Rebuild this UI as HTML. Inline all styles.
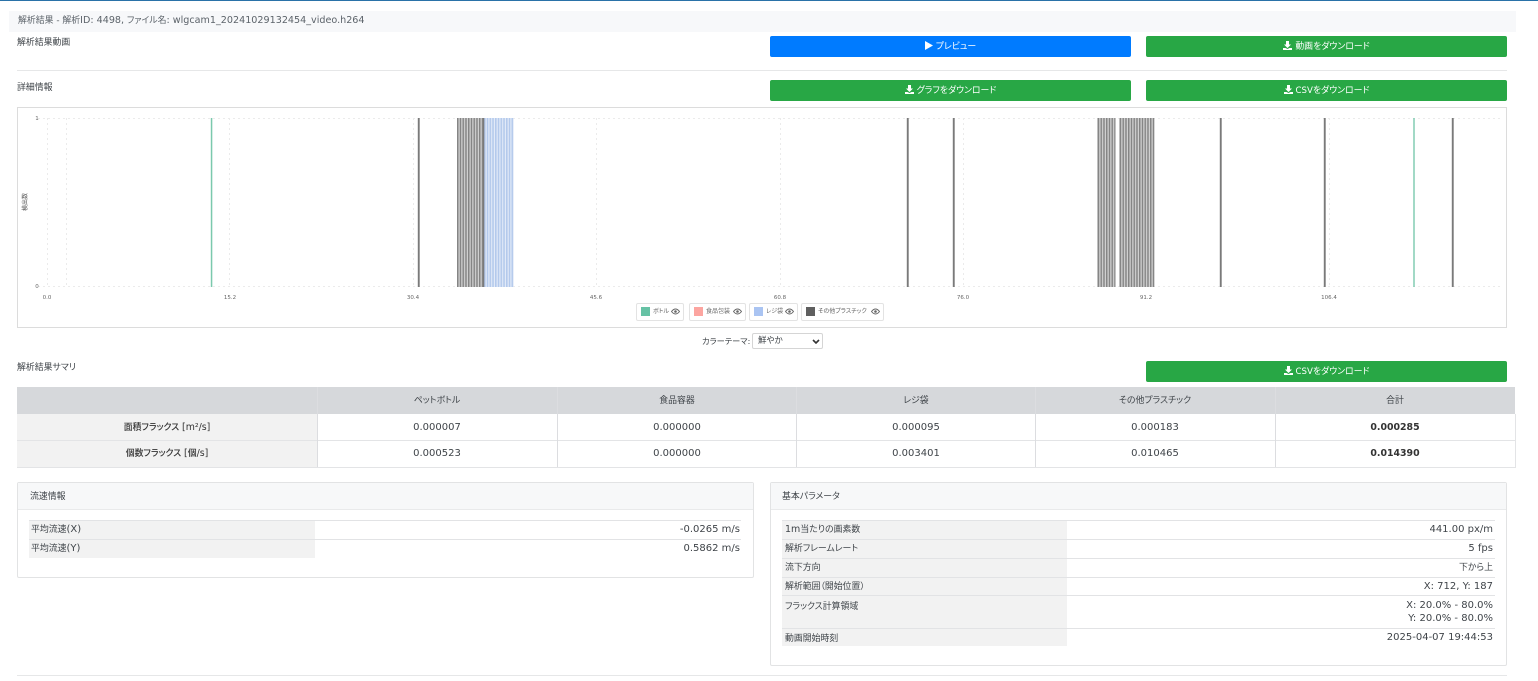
<!DOCTYPE html>
<html lang="ja"><head><meta charset="utf-8"><title>解析結果</title>
<style>
html,body{margin:0;padding:0;background:#fff}
body{width:1538px;height:681px;position:relative;overflow:hidden;font-family:"DejaVu Sans","Noto Sans CJK JP",sans-serif;font-size:8.9px;color:#3f4449;font-feature-settings:"palt";filter:blur(.25px)}
.b,.t,.r,.c{position:absolute}
.t,.r,.c{white-space:nowrap;line-height:14px;height:14px}
.c{text-align:center;transform:translateX(-50%)}
.r{text-align:right;transform:translateX(-100%)}
i{font-style:normal;font-size:10px}
strong{font-size:9.4px;color:#333}
.btn{position:absolute;height:21px;width:361px;border-radius:2px;color:#fff;text-align:center;line-height:22px;font-size:8.9px;background:#28a745}
.btn svg{vertical-align:-1px;margin-right:3px}
.btn i{font-size:8.6px}
.leg{position:absolute;top:303px;height:16px;border:1px solid #e3e3e3;border-radius:2px;background:#fff}
.leg u{position:absolute;left:4px;top:3px;width:9px;height:9px;text-decoration:none}
.leg span{position:absolute;left:16px;top:1px;line-height:13px;font-size:6px;color:#666;white-space:nowrap}
.leg svg{position:absolute;right:3px;top:4px}
.ax{font-size:5.5px;color:#666;position:absolute;transform:translateX(-50%);top:294px;line-height:8px}
.w{font-weight:500;color:#333}
</style></head><body>
<div class="b" style="left:0;top:0;width:1538px;height:1px;background:#2a72a8"></div>
<div class="b" style="left:9px;top:11px;width:1507px;height:21px;background:#f7f8fa"></div>
<div class="t" style="left:18px;top:14px;color:#5c636a">解析結果 - 解析<i style="font-size:9.6px">ID: 4498,</i> ファイル名<i style="font-size:9.6px">: wlgcam1_20241029132454_video.h264</i></div>
<div class="t" style="left:17px;top:36px">解析結果動画</div>
<div class="btn" style="left:770px;top:36px;background:#007bff"><svg width="8" height="9" viewBox="0 0 8 9"><path d="M0 0L8 4.5L0 9Z" fill="#fff"/></svg>プレビュー</div>
<div class="btn" style="left:1146px;top:36px"><svg width="9" height="9" viewBox="0 0 9 9"><path d="M3 0H6V3.5H8L4.5 7L1 3.5H3ZM0 7H2.5L4.5 8L6.5 7H9V9H0Z" fill="#fff"/></svg>動画をダウンロード</div>
<div class="b" style="left:17px;top:70px;width:1490px;height:1px;background:#e6e7e8"></div>
<div class="t" style="left:17px;top:81px">詳細情報</div>
<div class="btn" style="left:770px;top:80px"><svg width="9" height="9" viewBox="0 0 9 9"><path d="M3 0H6V3.5H8L4.5 7L1 3.5H3ZM0 7H2.5L4.5 8L6.5 7H9V9H0Z" fill="#fff"/></svg>グラフをダウンロード</div>
<div class="btn" style="left:1146px;top:80px"><svg width="9" height="9" viewBox="0 0 9 9"><path d="M3 0H6V3.5H8L4.5 7L1 3.5H3ZM0 7H2.5L4.5 8L6.5 7H9V9H0Z" fill="#fff"/></svg><i>CSV</i>をダウンロード</div>

<div class="b" style="left:17px;top:107px;width:1488px;height:219px;border:1px solid #dcdcdc"></div>
<svg class="b" style="left:0;top:0" width="1538" height="340" viewBox="0 0 1538 340">
<defs>
<pattern id="gs" width="2.75" height="10" patternUnits="userSpaceOnUse" x="457"><rect width="2.75" height="10" fill="#d2d2d2"/><rect width="1.5" height="10" fill="#858585"/></pattern>
<pattern id="bs" width="2.75" height="10" patternUnits="userSpaceOnUse" x="484"><rect width="2.75" height="10" fill="#e3ebf8"/><rect width="1.6" height="10" fill="#b3c9ec"/></pattern>
</defs>
<g stroke="#ebebeb" stroke-width="1" stroke-dasharray="2 3" fill="none">
<path d="M38 118.5H1500M38 286.5H1500"/>
<path d="M47.5 118V286M66.5 118V286M229.5 118V286M413.500 118V286M596.500 118V286M780.500 118V286M963.500 118V286M1146.500 118V286M1329.500 118V286"/>
</g>
<rect x="457" y="118" width="26" height="169" fill="url(#gs)"/>
<rect x="484" y="118" width="29.5" height="169" fill="url(#bs)"/>
<rect x="1097" y="118" width="18.5" height="169" fill="url(#gs)"/>
<rect x="1119" y="118" width="35.5" height="169" fill="url(#gs)"/>
<g fill="#7a7a7a">
<rect x="417.800" y="118" width="1.900" height="169"/><rect x="483" y="118" width="1.3" height="169"/><rect x="906.800" y="118" width="1.900" height="169"/><rect x="952.800" y="118" width="1.900" height="169"/><rect x="1219.800" y="118" width="1.900" height="169"/><rect x="1323.800" y="118" width="1.900" height="169"/><rect x="1451.800" y="118" width="1.900" height="169"/>
</g>
<g fill="#7bc9ad"><rect x="210.800" y="118" width="1.500" height="169"/><rect x="1413.300" y="118" width="1.400" height="169"/></g>
</svg>
<div class="ax" style="left:37px;top:115px">1</div>
<div class="ax" style="left:37px;top:283px">0</div>
<div class="ax" style="left:47px">0.0</div><div class="ax" style="left:230px">15.2</div><div class="ax" style="left:413px">30.4</div><div class="ax" style="left:596px">45.6</div><div class="ax" style="left:780px">60.8</div><div class="ax" style="left:963px">76.0</div><div class="ax" style="left:1146px">91.2</div><div class="ax" style="left:1329px">106.4</div>
<div class="b" style="left:6px;top:198px;width:40px;text-align:center;white-space:nowrap;font-size:6px;line-height:8px;color:#555;transform:rotate(-90deg)">検出数</div>

<div class="leg" style="left:636px;width:46px"><u style="background:#66c2a5"></u><span>ボトル</span><svg width="9" height="7" viewBox="0 0 9 7"><path d="M.5 3.5Q4.5-1.5 8.500 3.500Q4.500 8.500.5 3.500Z" fill="none" stroke="#666"/><circle cx="4.500" cy="3.500" r="1.300" fill="#666"/></svg></div>
<div class="leg" style="left:689px;width:55px"><u style="background:#fca5a0"></u><span>食品包装</span><svg width="9" height="7" viewBox="0 0 9 7"><path d="M.5 3.5Q4.5-1.5 8.500 3.500Q4.500 8.500.5 3.500Z" fill="none" stroke="#666"/><circle cx="4.500" cy="3.500" r="1.300" fill="#666"/></svg></div>
<div class="leg" style="left:749px;width:47px"><u style="background:#aac4f2"></u><span>レジ袋</span><svg width="9" height="7" viewBox="0 0 9 7"><path d="M.5 3.5Q4.5-1.5 8.500 3.500Q4.500 8.500.5 3.500Z" fill="none" stroke="#666"/><circle cx="4.500" cy="3.500" r="1.300" fill="#666"/></svg></div>
<div class="leg" style="left:801px;width:81px"><u style="background:#5f5f5f"></u><span>その他プラスチック</span><svg width="9" height="7" viewBox="0 0 9 7"><path d="M.5 3.5Q4.5-1.5 8.500 3.500Q4.500 8.500.5 3.500Z" fill="none" stroke="#666"/><circle cx="4.500" cy="3.500" r="1.300" fill="#666"/></svg></div>

<div class="t" style="left:702px;top:334px;font-size:8.2px">カラーテーマ<i style="font-size:8px">:</i></div>
<div class="b" style="left:752px;top:333px;width:69px;height:14px;border:1px solid #d5d5d5;border-radius:2px"></div>
<div class="t" style="left:758px;top:334px;font-size:8.5px">鮮やか</div>
<svg class="b" style="left:812px;top:339px" width="8" height="5" viewBox="0 0 8 5"><path d="M1 1L4 4L7 1" fill="none" stroke="#333" stroke-width="1.600"/></svg>

<div class="t" style="left:17px;top:361px">解析結果サマリ</div>
<div class="btn" style="left:1146px;top:361px"><svg width="9" height="9" viewBox="0 0 9 9"><path d="M3 0H6V3.5H8L4.5 7L1 3.5H3ZM0 7H2.5L4.5 8L6.5 7H9V9H0Z" fill="#fff"/></svg><i>CSV</i>をダウンロード</div>

<div class="b" style="left:17px;top:387px;width:1498px;height:27px;background:#d6d8db"></div>
<div class="b" style="left:17px;top:414px;width:300px;height:53px;background:#f2f2f2"></div>
<div class="b" style="left:17px;top:440px;width:1498px;height:1px;background:#e3e4e6"></div>
<div class="b" style="left:17px;top:467px;width:1498px;height:1px;background:#e3e4e6"></div>
<div class="b" style="left:1515px;top:414px;width:1px;height:54px;background:#e3e4e6"></div>
<div class="b" style="left:317px;top:387px;width:1px;height:80px;background:#dcdde0"></div>
<div class="b" style="left:557px;top:387px;width:1px;height:80px;background:#dcdde0"></div>
<div class="b" style="left:796px;top:387px;width:1px;height:80px;background:#dcdde0"></div>
<div class="b" style="left:1035px;top:387px;width:1px;height:80px;background:#dcdde0"></div>
<div class="b" style="left:1275px;top:387px;width:1px;height:80px;background:#dcdde0"></div>
<div class="c" style="left:437px;top:394px">ペットボトル</div><div class="c" style="left:677px;top:394px">食品容器</div><div class="c" style="left:916px;top:394px">レジ袋</div><div class="c" style="left:1155px;top:394px">その他プラスチック</div><div class="c" style="left:1395px;top:394px">合計</div>
<div class="c w" style="left:167px;top:421px">面積フラックス <i style="font-size:9.4px">[m²/s]</i></div>
<div class="c w" style="left:167px;top:447px">個数フラックス <i style="font-size:9.4px">[</i>個<i style="font-size:9.4px">/s]</i></div>
<div class="c" style="left:437px;top:421px"><i>0.000007</i></div><div class="c" style="left:677px;top:421px"><i>0.000000</i></div><div class="c" style="left:916px;top:421px"><i>0.000095</i></div><div class="c" style="left:1155px;top:421px"><i>0.000183</i></div><div class="c" style="left:1395px;top:421px"><strong>0.000285</strong></div>
<div class="c" style="left:437px;top:447px"><i>0.000523</i></div><div class="c" style="left:677px;top:447px"><i>0.000000</i></div><div class="c" style="left:916px;top:447px"><i>0.003401</i></div><div class="c" style="left:1155px;top:447px"><i>0.010465</i></div><div class="c" style="left:1395px;top:447px"><strong>0.014390</strong></div>

<div class="b" style="left:17px;top:482px;width:735px;height:94px;border:1px solid #e2e3e4;border-radius:2px"></div>
<div class="b" style="left:18px;top:483px;width:735px;height:26px;background:#f7f8f9;border-bottom:1px solid #e9eaeb"></div>
<div class="t" style="left:30px;top:490px">流速情報</div>
<div class="b" style="left:29px;top:521px;width:286px;height:37px;background:#f2f2f2"></div>
<div class="b" style="left:29px;top:520px;width:712px;height:1px;background:#e2e3e5"></div>
<div class="b" style="left:29px;top:539px;width:712px;height:1px;background:#e2e3e5"></div>
<div class="t" style="left:31px;top:523px">平均流速<i>(X)</i></div><div class="r" style="left:740px;top:523px"><i>-0.0265 m/s</i></div>
<div class="t" style="left:31px;top:542px">平均流速<i>(Y)</i></div><div class="r" style="left:740px;top:542px"><i>0.5862 m/s</i></div>

<div class="b" style="left:770px;top:482px;width:735px;height:182px;border:1px solid #e2e3e4;border-radius:2px"></div>
<div class="b" style="left:771px;top:483px;width:735px;height:26px;background:#f7f8f9;border-bottom:1px solid #e9eaeb"></div>
<div class="t" style="left:782px;top:490px">基本パラメータ</div>
<div class="b" style="left:782px;top:521px;width:285px;height:125px;background:#f2f2f2"></div>
<div class="b" style="left:782px;top:520px;width:713px;height:1px;background:#e2e3e5"></div>
<div class="b" style="left:782px;top:539px;width:713px;height:1px;background:#e2e3e5"></div>
<div class="b" style="left:782px;top:558px;width:713px;height:1px;background:#e2e3e5"></div>
<div class="b" style="left:782px;top:577px;width:713px;height:1px;background:#e2e3e5"></div>
<div class="b" style="left:782px;top:595px;width:713px;height:1px;background:#e2e3e5"></div>
<div class="b" style="left:782px;top:628px;width:713px;height:1px;background:#e2e3e5"></div>
<div class="t" style="left:785px;top:523px"><i style="font-size:9.5px">1m</i>当たりの画素数</div><div class="r" style="left:1493px;top:523px"><i>441.00 px/m</i></div>
<div class="t" style="left:785px;top:542px">解析フレームレート</div><div class="r" style="left:1493px;top:542px"><i>5 fps</i></div>
<div class="t" style="left:785px;top:561px">流下方向</div><div class="r" style="left:1493px;top:561px">下から上</div>
<div class="t" style="left:785px;top:580px">解析範囲（開始位置）</div><div class="r" style="left:1493px;top:580px"><i>X: 712, Y: 187</i></div>
<div class="t" style="left:785px;top:600px">フラックス計算領域</div><div class="r" style="left:1493px;top:599px"><i>X: 20.0% - 80.0%</i></div><div class="r" style="left:1493px;top:612px"><i>Y: 20.0% - 80.0%</i></div>
<div class="t" style="left:785px;top:632px">動画開始時刻</div><div class="r" style="left:1493px;top:631px"><i>2025-04-07 19:44:53</i></div>
<div class="b" style="left:17px;top:675px;width:1490px;height:1px;background:#e6e7e8"></div>
</body></html>
